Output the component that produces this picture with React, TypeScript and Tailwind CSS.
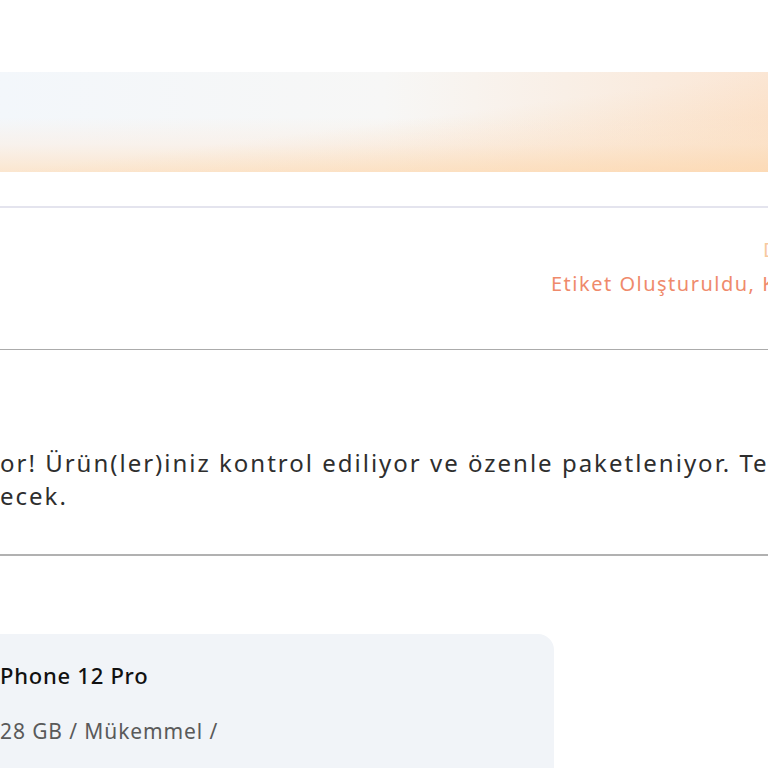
import React from "react";

const font = { fontFamily: '"Noto Sans", "Open Sans", Arial, sans-serif' };

const App: React.FC = () => {
  return (
    <div
      className="w-[768px] h-[768px] overflow-hidden bg-white"
      style={font}
    >
      <div className="pt-[72px]">
        <div className="relative h-[100px] overflow-hidden bg-gradient-to-r from-[#f3f7fb] via-[#f7f7f6] to-[#fbe6d4]">
          <div className="absolute inset-x-0 bottom-0 h-[55px] bg-gradient-to-b from-transparent via-[#fbeee3]/60 to-[#fde2c4]/80" />
          <div className="absolute inset-0 bg-gradient-to-br from-transparent via-transparent to-[#fcd5ab]/60" />
        </div>
      </div>

      <div className="mt-[34px] border-b-2 border-[#e4e4ee]" />

      <div className="h-[142px] border-b border-[#ababab] overflow-hidden">
        <div className="pt-[25px] pl-[763px] text-[20px] leading-[34px] tracking-[1.5px] whitespace-nowrap text-[#f7c99f]">
          Durum
        </div>
        <div className="pl-[551px] text-[20px] leading-[34px] tracking-[1.5px] whitespace-nowrap text-[#ef8a6b]">
          Etiket Oluşturuldu, Kargoya Verildi
        </div>
      </div>

      <div className="h-[206px] border-b-2 border-[#b1b1b1] overflow-hidden">
        <div className="pt-[96px] text-[24px] leading-[33px] tracking-[2px] text-[#2e2e2e] whitespace-nowrap">
          <div>or! Ürün(ler)iniz kontrol ediliyor ve özenle paketleniyor. Teslimat</div>
          <div>ecek.</div>
        </div>
      </div>

      <div className="mt-[78px] w-[554px] h-[200px] rounded-tr-2xl bg-[#f1f4f8] pt-[25px]">
        <div className="text-[22px] leading-[32px] tracking-[0.75px] font-medium text-[#111] whitespace-nowrap">
          Phone 12 Pro
        </div>
        <div className="mt-[25px] text-[21px] leading-[30px] tracking-[0.9px] text-[#5a5a5a] whitespace-nowrap">
          28 GB / Mükemmel /
        </div>
      </div>
    </div>
  );
};

export default App;
